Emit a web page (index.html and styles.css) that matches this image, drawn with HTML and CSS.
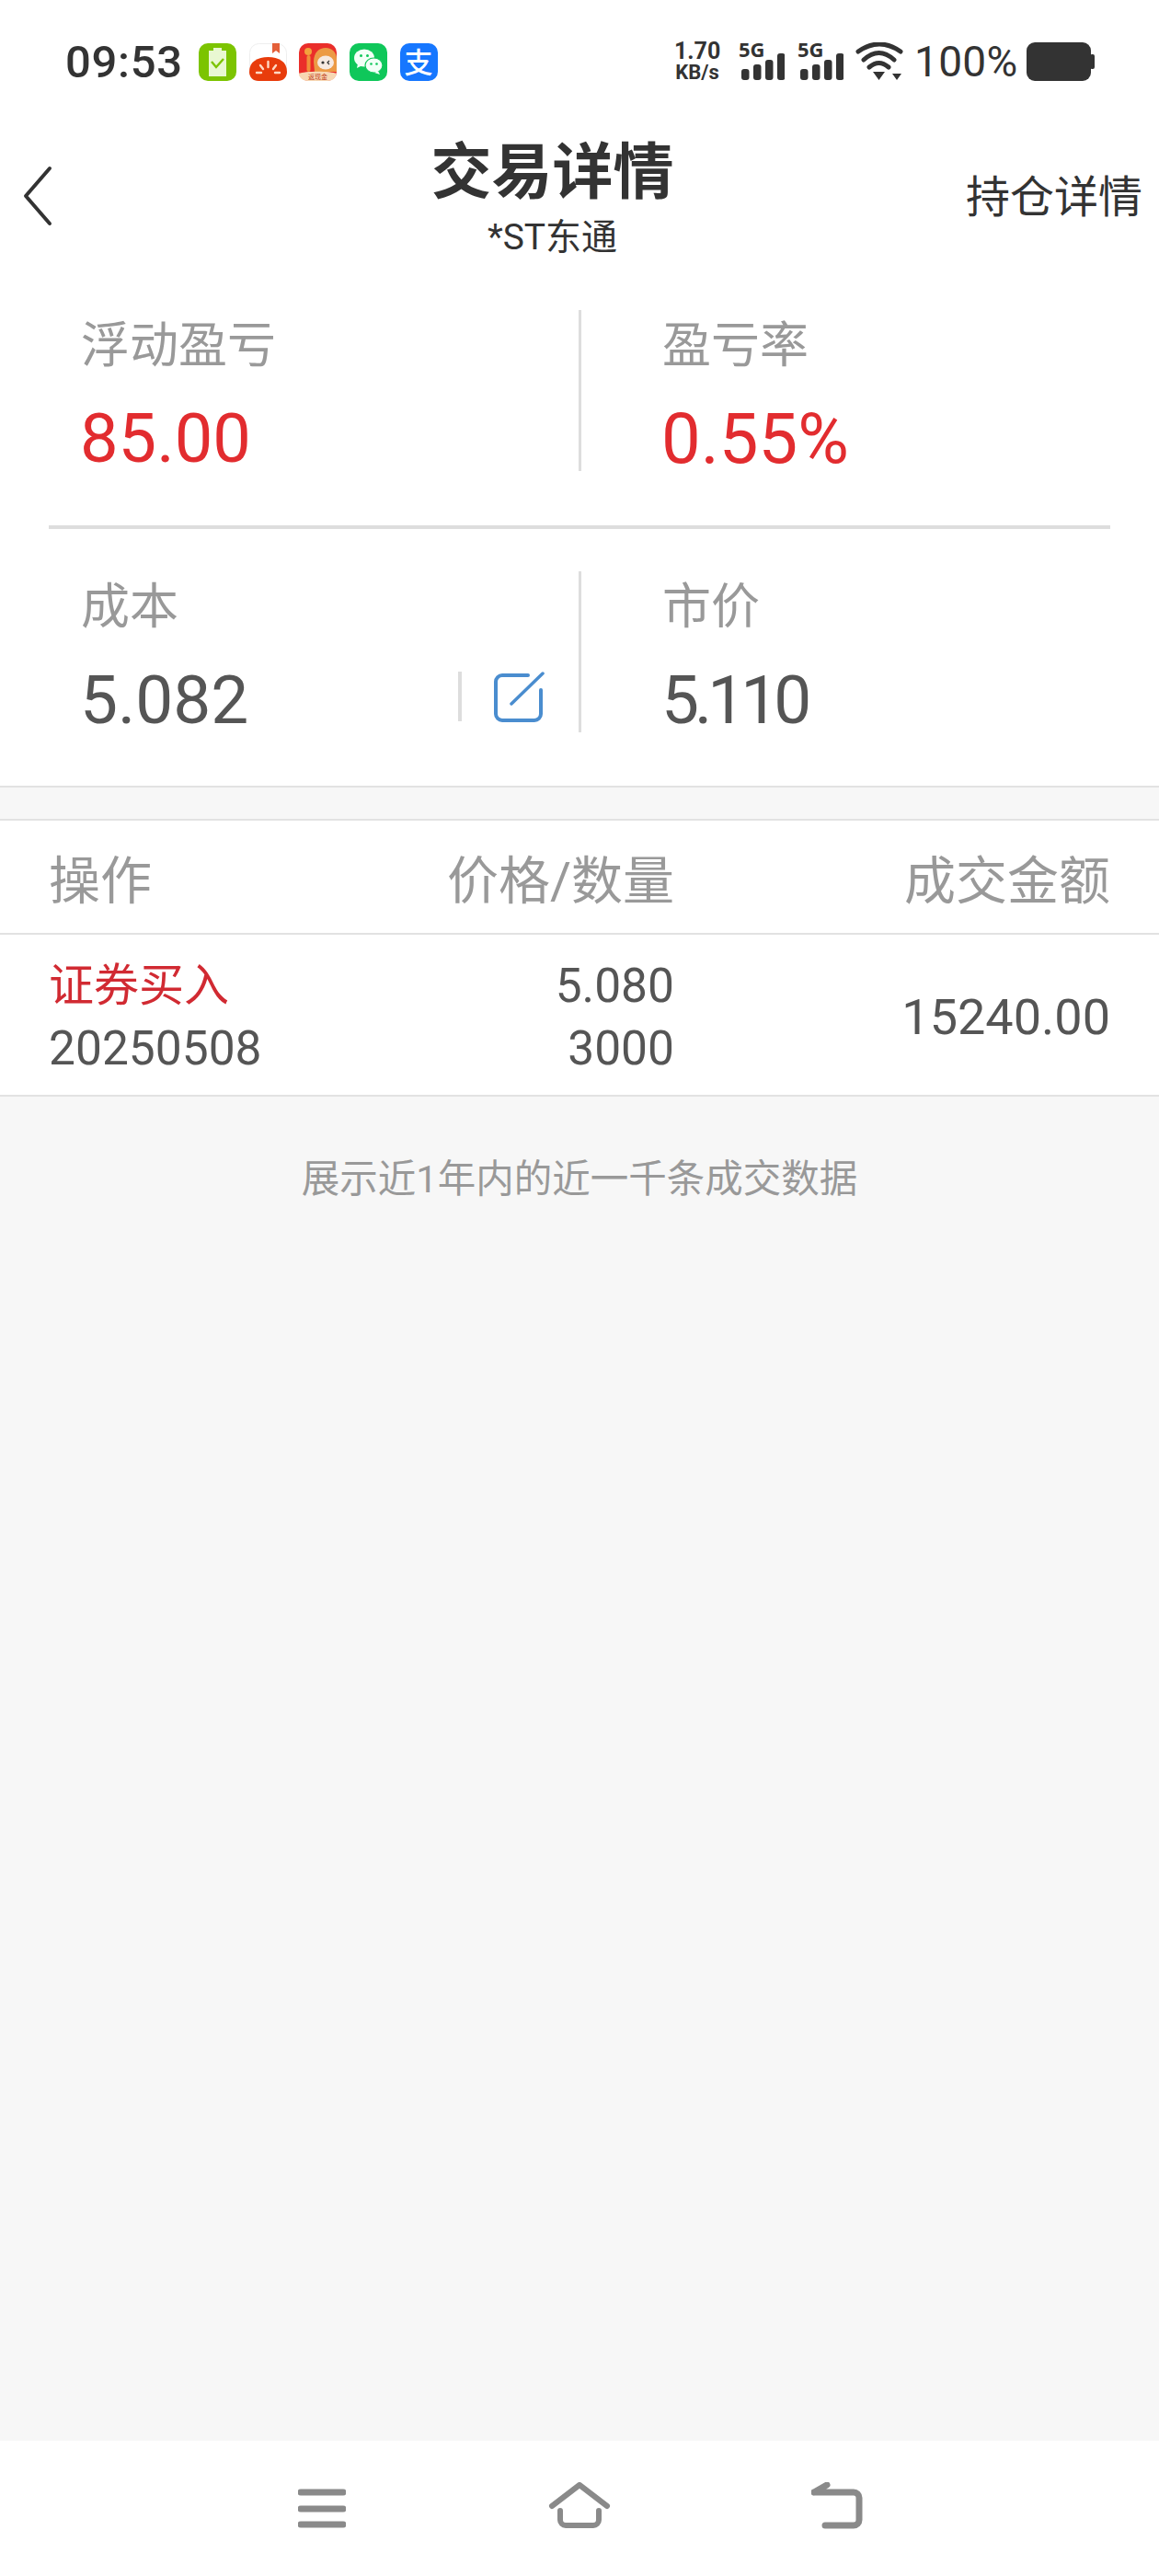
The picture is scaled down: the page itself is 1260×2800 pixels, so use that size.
FILE: index.html
```html
<!DOCTYPE html>
<html lang="zh-CN">
<head>
    <meta charset="UTF-8">
    <meta name="viewport" content="width=device-width, initial-scale=1.0">
    <title>交易详情</title>
    <link rel="stylesheet" href="styles.css">
</head>
<body>
    <div class="page">

        <!-- Status bar -->
        <div class="status-bar">
            <span class="clock">09:53</span>
            <div class="app-icons">
                <svg class="app-icon" viewBox="0 0 41 41">
                    <rect width="41" height="41" rx="10" fill="#7cc400"/>
                    <rect x="16" y="5" width="9" height="4" fill="#e9f8d2"/>
                    <rect x="11" y="8" width="19" height="28" fill="#e9f8d2"/>
                    <path d="M14 20l5 6 8-9" fill="none" stroke="#7cc400" stroke-width="2.4"/>
                </svg>
                <svg class="app-icon" viewBox="0 0 41 41">
                    <rect x=".5" y=".5" width="40" height="40" rx="10" fill="#fff" stroke="#eee"/>
                    <path d="M25 0h8v11l-4-3-4 3z" fill="#e4603a"/>
                    <path d="M0 31C0 20 9 15 20.500 15S41 20 41 31c0 6-4 10-10 10H10C4 41 0 37 0 31z" fill="#e83c0c"/>
                    <path d="M20.500 20v6M12 24l3 4M29 24l-3 4M8 32h5M28 32h5" stroke="#ffd9c4" stroke-width="2.400" stroke-linecap="round"/>
                </svg>
                <svg class="app-icon" viewBox="0 0 41 41">
                    <rect width="41" height="41" rx="10" fill="#ea2e2a"/>
                    <circle cx="10" cy="9" r="4" fill="#f3a13c"/>
                    <rect x="8.500" y="13" width="4" height="18" rx="2" fill="#f0903a"/>
                    <path d="M16 20c0-10 6-15 13-15s12 5 12 12v14H17z" fill="#ec9a45"/>
                    <ellipse cx="29" cy="21" rx="9" ry="7.500" fill="#f6e9e2"/>
                    <circle cx="26" cy="21" r="1.600" fill="#333"/>
                    <path d="M33 19l-2 2 2 2" fill="none" stroke="#333" stroke-width="1.200"/>
                    <path d="M0 33c6-3 35-3 41 0v-2 0c0 6-4 10-10 10H10C4 41 0 37 0 33z" fill="#f7d8b4"/>
                    <text class="tiny-label" x="20.500" y="39">返现金</text>
                </svg>
                <svg class="app-icon" viewBox="0 0 41 41">
                    <rect width="41" height="41" rx="10" fill="#0fc75a"/>
                    <ellipse cx="16" cy="16" rx="11" ry="9.500" fill="#f2fff7"/>
                    <path d="M9 22l-1 5 6-3z" fill="#f2fff7"/>
                    <ellipse cx="26.500" cy="24" rx="9.500" ry="8" fill="#f2fff7" stroke="#0fc75a" stroke-width="1.200"/>
                    <path d="M31 30l2 4-6-2z" fill="#f2fff7"/>
                    <circle cx="12.500" cy="13.500" r="1.500" fill="#0fc75a"/>
                    <circle cx="19.500" cy="13.500" r="1.500" fill="#0fc75a"/>
                    <circle cx="23.500" cy="22.500" r="1.300" fill="#0fc75a"/>
                    <circle cx="29.500" cy="22.500" r="1.300" fill="#0fc75a"/>
                </svg>
                <svg class="app-icon" viewBox="0 0 41 41">
                    <rect width="41" height="41" rx="10" fill="#1677ff"/>
                    <text class="alipay-mark" x="20" y="32">支</text>
                </svg>
            </div>
            <div class="status-right">
                <div class="net-speed">
                    <span class="net-value">1.70</span>
                    <span class="net-unit">KB/s</span>
                </div>
                <svg class="signal" viewBox="0 -8 50 58">
                    <text class="signal-text" x="0" y="16">5G</text>
                    <rect x="3" y="29" width="8.500" height="12" rx="3"/>
                    <rect x="16" y="24" width="8.500" height="17" rx="3"/>
                    <rect x="29" y="19" width="8.500" height="22" rx="3"/>
                    <rect x="42" y="12" width="8.500" height="29" rx="3"/>
                </svg>
                <svg class="signal" viewBox="0 -8 50 58">
                    <text class="signal-text" x="0" y="16">5G</text>
                    <rect x="3" y="29" width="8.500" height="12" rx="3"/>
                    <rect x="16" y="24" width="8.500" height="17" rx="3"/>
                    <rect x="29" y="19" width="8.500" height="22" rx="3"/>
                    <rect x="42" y="12" width="8.500" height="29" rx="3"/>
                </svg>
                <svg class="wifi" viewBox="0 0 52 42">
                    <path d="M3 10Q26-6 49 10M9 19Q25.500 4 42 19M15 27Q25.500 18 36 27" fill="none" stroke="#333" stroke-width="5" stroke-linecap="round"/>
                    <path d="M19 32h13l-6.500 9zM40 34h10l-5 7z" fill="#333"/>
                </svg>
                <span class="battery-text">100%</span>
                <svg class="battery" viewBox="0 0 74 42">
                    <rect width="70" height="42" rx="9" fill="#333"/>
                    <rect x="69" y="13" width="5" height="16" rx="2" fill="#333"/>
                </svg>
            </div>
        </div>

        <!-- Title bar -->
        <div class="nav-bar">
            <div class="nav-back">
                <svg class="back-icon" viewBox="0 0 32 66">
                    <path d="M29 3L3 33l26 30" fill="none" stroke="#333" stroke-width="4" stroke-linecap="round" stroke-linejoin="round"/>
                </svg>
            </div>
            <div class="nav-title">
                <h1>交易详情</h1>
                <p>*ST东通</p>
            </div>
            <span class="nav-action">持仓详情</span>
        </div>

        <!-- Summary -->
        <div class="summary">
            <div class="stat-row">
                <div class="stat">
                    <div class="stat-label">浮动盈亏</div>
                    <div class="stat-value red">85.00</div>
                </div>
                <div class="stat">
                    <div class="stat-label">盈亏率</div>
                    <div class="stat-value red pct">0.55%</div>
                </div>
            </div>
            <div class="summary-line"></div>
            <div class="stat-row">
                <div class="stat">
                    <div class="stat-label">成本</div>
                    <div class="stat-edit">
                        <div class="stat-value">5.082</div>
                        <span class="edit-sep"></span>
                        <svg class="edit-icon" viewBox="0 0 56 56">
                            <path d="M38 4H10a7 7 0 0 0-7 7v35a7 7 0 0 0 7 7h35a7 7 0 0 0 7-7V20" fill="none" stroke="#4a8dcf" stroke-width="4" stroke-linecap="round"/>
                            <path d="M20 35L54 2" fill="none" stroke="#4a8dcf" stroke-width="3.500" stroke-linecap="round"/>
                        </svg>
                    </div>
                </div>
                <div class="stat">
                    <div class="stat-label">市价</div>
                    <div class="stat-value tight">5.110</div>
                </div>
            </div>
        </div>

        <!-- Trades -->
        <div class="trades">
            <div class="trade-grid trade-head">
                <span>操作</span>
                <span class="num">价格/数量</span>
                <span class="num">成交金额</span>
            </div>
            <div class="trade-grid trade-row">
                <div>
                    <div class="trade-type">证券买入</div>
                    <div>20250508</div>
                </div>
                <div class="num">
                    <div>5.080</div>
                    <div>3000</div>
                </div>
                <div class="num trade-amount">15240.00</div>
            </div>
        </div>

        <div class="content-fill">
            <p class="note">展示近1年内的近一千条成交数据</p>
        </div>

        <!-- System navigation -->
        <div class="sys-nav">
            <svg class="sys-menu" viewBox="0 0 52 52">
                <path d="M3 11h46M3 29h46M3 46h46" fill="none" stroke="#8a8a8a" stroke-width="7" stroke-linecap="round"/>
            </svg>
            <svg class="sys-home" viewBox="0 0 68 52">
                <path d="M4 26L34 3l30 23" fill="none" stroke="#8a8a8a" stroke-width="6" stroke-linecap="round" stroke-linejoin="round"/>
                <path d="M13 31v10a6 6 0 0 0 6 6h30a6 6 0 0 0 6-6V31" fill="none" stroke="#8a8a8a" stroke-width="6" stroke-linecap="round"/>
            </svg>
            <svg class="sys-back" viewBox="0 0 56 52">
                <path d="M3 11h43a6 6 0 0 1 6 6v24a6 6 0 0 1-6 6H15M3 11l14-8" fill="none" stroke="#8a8a8a" stroke-width="7" stroke-linecap="round" stroke-linejoin="round"/>
            </svg>
        </div>

    </div>
</body>
</html>
```

FILE: styles.css
```css
* {
    margin: 0;
    padding: 0;
    box-sizing: border-box;
}

body {
    font-family: Roboto, "Noto Sans CJK SC", sans-serif;
    background-color: #f7f7f7;
    color: #333;
}

.page {
    display: flex;
    flex-direction: column;
    height: 2800px;
}

/* Status bar */
.status-bar {
    display: flex;
    align-items: center;
    height: 134px;
    padding: 0 70px 0 71px;
    background-color: #fff;
    flex-shrink: 0;
}

.clock {
    width: 145px;
    font-size: 49px;
    font-weight: 500;
    letter-spacing: 0.7px;
}

.app-icons {
    display: flex;
    gap: 13.7px;
}

.app-icon {
    width: 41px;
    height: 41px;
}

.tiny-label {
    font-size: 7px;
    fill: #c1401c;
    text-anchor: middle;
}

.alipay-mark {
    font-size: 31px;
    font-weight: 500;
    fill: #fff;
    text-anchor: middle;
}

.status-right {
    display: flex;
    align-items: center;
    margin-left: auto;
}

.net-speed {
    display: flex;
    flex-direction: column;
    width: 50px;
    margin-right: 20px;
    font-weight: 700;
    text-align: center;
}

.net-value {
    font-size: 25px;
    line-height: 23px;
}

.net-unit {
    font-size: 22px;
    line-height: 23px;
}

.signal {
    width: 50px;
    height: 58px;
    margin: -8px 14px -8px 0;
    fill: #333;
}

.signal-text {
    font-family: "Open Sans", sans-serif;
    font-size: 22px;
    font-weight: 700;
}

.wifi {
    width: 52px;
    height: 42px;
    margin-left: -1px;
    margin-right: 12px;
}

.battery-text {
    width: 110px;
    margin-right: 12px;
    font-size: 46px;
    letter-spacing: 0.3px;
}

.battery {
    width: 74px;
    height: 42px;
}

/* Title bar */
.nav-bar {
    display: flex;
    align-items: center;
    height: 158px;
    background-color: #fff;
    flex-shrink: 0;
}

.nav-back {
    display: flex;
    width: 151px;
    padding-left: 25px;
}

.back-icon {
    width: 32px;
    height: 66px;
}

.nav-title {
    flex: 1;
    align-self: flex-start;
    padding-top: 14px;
    text-align: center;
}

.nav-title h1 {
    font-size: 66px;
    font-weight: 700;
    line-height: 80px;
}

.nav-title p {
    margin-top: 5px;
    font-size: 39px;
    line-height: 50px;
}

.nav-action {
    margin-bottom: 6px;
    padding-right: 18px;
    font-size: 48px;
}

/* Summary */
.summary {
    padding: 45px 0 58px;
    background-color: #fff;
    border-bottom: 2px solid #e2e2e2;
    flex-shrink: 0;
}

.stat-row {
    display: flex;
    height: 175px;
}

.stat {
    width: 628px;
    padding: 9px 0 0 88px;
}

.stat:first-child {
    width: 632px;
    border-right: 3px solid #ddd;
}

.stat-label {
    font-size: 53px;
    line-height: 60px;
    color: #999;
}

.stat-value {
    margin-top: 36px;
    margin-left: -1px;
    font-size: 73px;
    line-height: 70px;
    color: #555;
}

.stat-value.red {
    font-size: 74px;
    color: #e22c2f;
}

.stat-value.pct {
    font-size: 76px;
}

.stat-value.tight {
    letter-spacing: -5px;
}

.summary-line {
    height: 4px;
    margin: 59px 53px 46px;
    background-color: #ddd;
}

.stat-edit {
    display: flex;
    align-items: flex-start;
}

.stat-edit .stat-value {
    flex: 1;
}

.edit-sep {
    width: 4px;
    height: 54px;
    margin: 40px 34px 0 0;
    background-color: #ddd;
}

.edit-icon {
    width: 56px;
    height: 56px;
    margin: 40px 37px 0 0;
}

/* Trades */
.trades {
    margin-top: 34px;
    background-color: #fff;
    border-top: 2px solid #e2e2e2;
    flex-shrink: 0;
}

.trade-grid {
    display: grid;
    grid-template-columns: 380px 300px 1fr;
    align-items: center;
    padding: 0 53px;
    border-bottom: 2px solid #e2e2e2;
}

.trade-head {
    height: 124px;
    padding-bottom: 2px;
    font-size: 56px;
    color: #999;
}

.trade-row {
    height: 176px;
    padding-top: 5px;
    font-size: 51.500px;
    line-height: 68px;
    color: #555;
}

.trade-type {
    font-size: 49px;
    color: #d12a32;
}

.trade-amount {
    font-size: 54px;
}

.num {
    text-align: right;
}

.content-fill {
    flex: 1;
}

.note {
    margin-top: 60px;
    font-size: 41.500px;
    line-height: 60px;
    color: #999;
    text-align: center;
}

/* System navigation */
.sys-nav {
    display: flex;
    align-items: flex-start;
    height: 147px;
    padding: 45px 0 0 324px;
    background-color: #fff;
    flex-shrink: 0;
}

.sys-menu {
    width: 52px;
    height: 52px;
    margin-right: 220px;
}

.sys-home {
    width: 68px;
    height: 52px;
    margin-right: 218px;
}

.sys-back {
    width: 56px;
    height: 52px;
}
```
